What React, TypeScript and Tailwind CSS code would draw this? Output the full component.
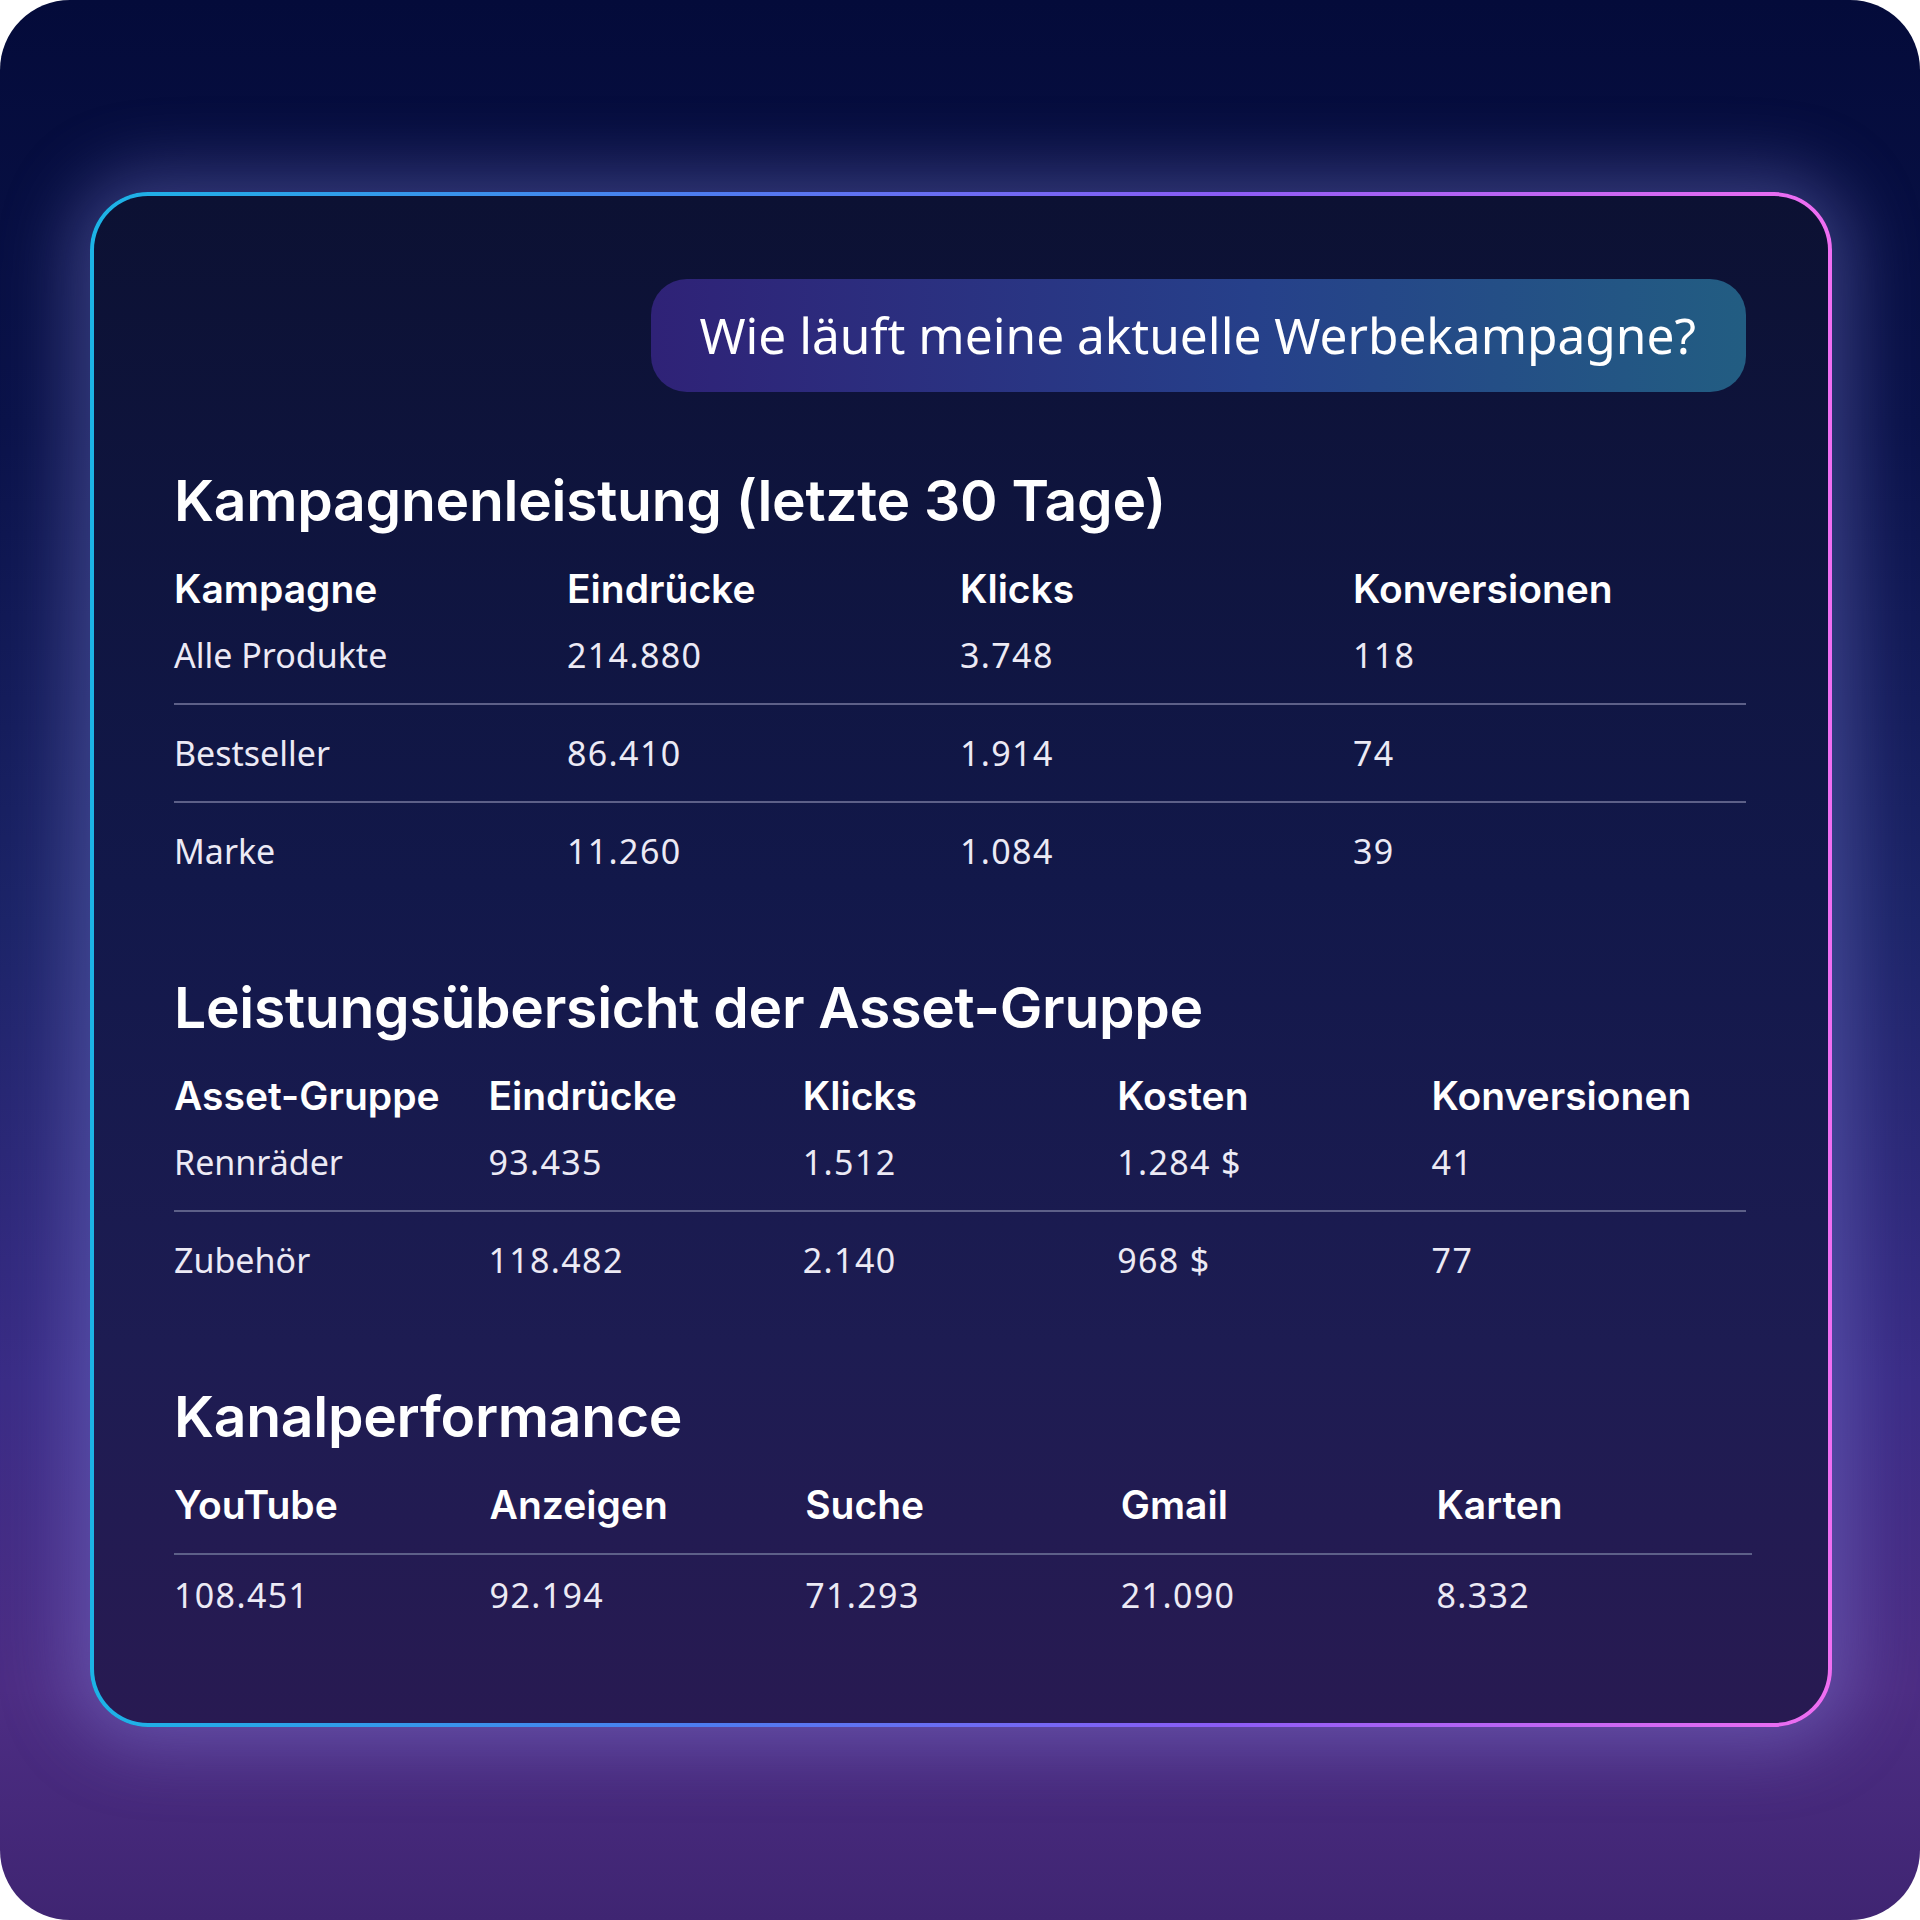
const body = { fontFamily: '"Noto Sans", "Open Sans", sans-serif' }
const head = { fontFamily: 'Inter, "Liberation Sans", sans-serif' }

const campaigns = [
  ['Alle Produkte', '214.880', '3.748', '118'],
  ['Bestseller', '86.410', '1.914', '74'],
  ['Marke', '11.260', '1.084', '39'],
]

const assets = [
  ['Rennräder', '93.435', '1.512', '1.284 $', '41'],
  ['Zubehör', '118.482', '2.140', '968 $', '77'],
]

const channels = ['YouTube', 'Anzeigen', 'Suche', 'Gmail', 'Karten']
const channelValues = ['108.451', '92.194', '71.293', '21.090', '8.332']

function SectionTitle({ children }: { children: React.ReactNode }) {
  return (
    <h2 style={head} className="text-[57px] leading-[64px] font-semibold tracking-[-0.005em] text-white">
      {children}
    </h2>
  )
}

function HeaderRow({ cells, cols }: { cells: string[]; cols: string }) {
  return (
    <div style={head} className={`grid ${cols} text-[39px] leading-[46px] font-semibold text-white`}>
      {cells.map((c) => (
        <span key={c}>{c}</span>
      ))}
    </div>
  )
}

function DataRows({ rows, cols }: { rows: string[][]; cols: string }) {
  return (
    <div className="flex flex-col">
      {rows.map((r, i) => (
        <div
          key={r[0]}
          style={body}
          className={`grid ${cols} text-[34px] leading-[40px] text-[#eceaf5] ${i === 0 ? 'pt-[23px] pb-[28px]' : 'py-[28px] border-t-2 border-[#5d6088]'}`}
        >
          {r.map((c, j) => (
            <span key={j} className={j === 0 ? '' : 'tracking-[0.04em]'}>
              {c}
            </span>
          ))}
        </div>
      ))}
    </div>
  )
}

export default function App() {
  return (
    <div className="w-[1920px] h-[1920px] bg-white">
      <div className="w-full h-full rounded-[70px] overflow-hidden bg-[linear-gradient(180deg,#040b3a_0%,#0a1249_22%,#1c2468_48%,#3a2c86_72%,#4d2d84_88%,#3f2572_100%)] pt-[192px] pl-[90px]">
        {/* Gradient border card */}
        <div className="w-[1742px] h-[1535px] rounded-[58px] p-[4px] bg-[linear-gradient(90deg,#1cb4e6_0%,#4d7cf0_35%,#8b5cf6_65%,#f06ef2_100%)] shadow-[0_0_70px_18px_rgba(150,150,240,0.35)]">
          <div className="w-full h-full rounded-[54px] bg-[linear-gradient(180deg,#0c1133_0%,#12184a_45%,#1d1c52_75%,#281a52_100%)] pt-[83px] pl-[80px] pr-[82px]">
            {/* Question bubble */}
            <div className="flex justify-end">
              <div
                style={body}
                className="h-[113px] pl-[48px] pr-[50px] flex items-center rounded-[36px] bg-[linear-gradient(90deg,#2f2277_0%,#26408a_55%,#225d82_100%)] text-white text-[49.6px]"
              >
                Wie läuft meine aktuelle Werbekampagne?
              </div>
            </div>

            {/* Kampagnenleistung */}
            <div className="mt-[77px]">
              <SectionTitle>Kampagnenleistung (letzte 30 Tage)</SectionTitle>
              <div className="mt-[33px]">
                <HeaderRow cols="grid-cols-4" cells={['Kampagne', 'Eindrücke', 'Klicks', 'Konversionen']} />
                <DataRows cols="grid-cols-4" rows={campaigns} />
              </div>
            </div>

            {/* Asset-Gruppe */}
            <div className="mt-[77px]">
              <SectionTitle>Leistungsübersicht der Asset-Gruppe</SectionTitle>
              <div className="mt-[33px]">
                <HeaderRow cols="grid-cols-5" cells={['Asset-Gruppe', 'Eindrücke', 'Klicks', 'Kosten', 'Konversionen']} />
                <DataRows cols="grid-cols-5" rows={assets} />
              </div>
            </div>

            {/* Kanalperformance */}
            <div className="mt-[77px]">
              <SectionTitle>Kanalperformance</SectionTitle>
              <div className="mt-[33px] -mr-[6px]">
                <div className="pb-[25px] border-b-2 border-[#5d6088]">
                  <HeaderRow cols="grid-cols-5" cells={channels} />
                </div>
                <div style={body} className="grid grid-cols-5 pt-[20px] text-[34px] leading-[40px] tracking-[0.04em] text-[#eceaf5]">
                  {channelValues.map((v) => (
                    <span key={v}>{v}</span>
                  ))}
                </div>
              </div>
            </div>
          </div>
        </div>
      </div>
    </div>
  )
}
